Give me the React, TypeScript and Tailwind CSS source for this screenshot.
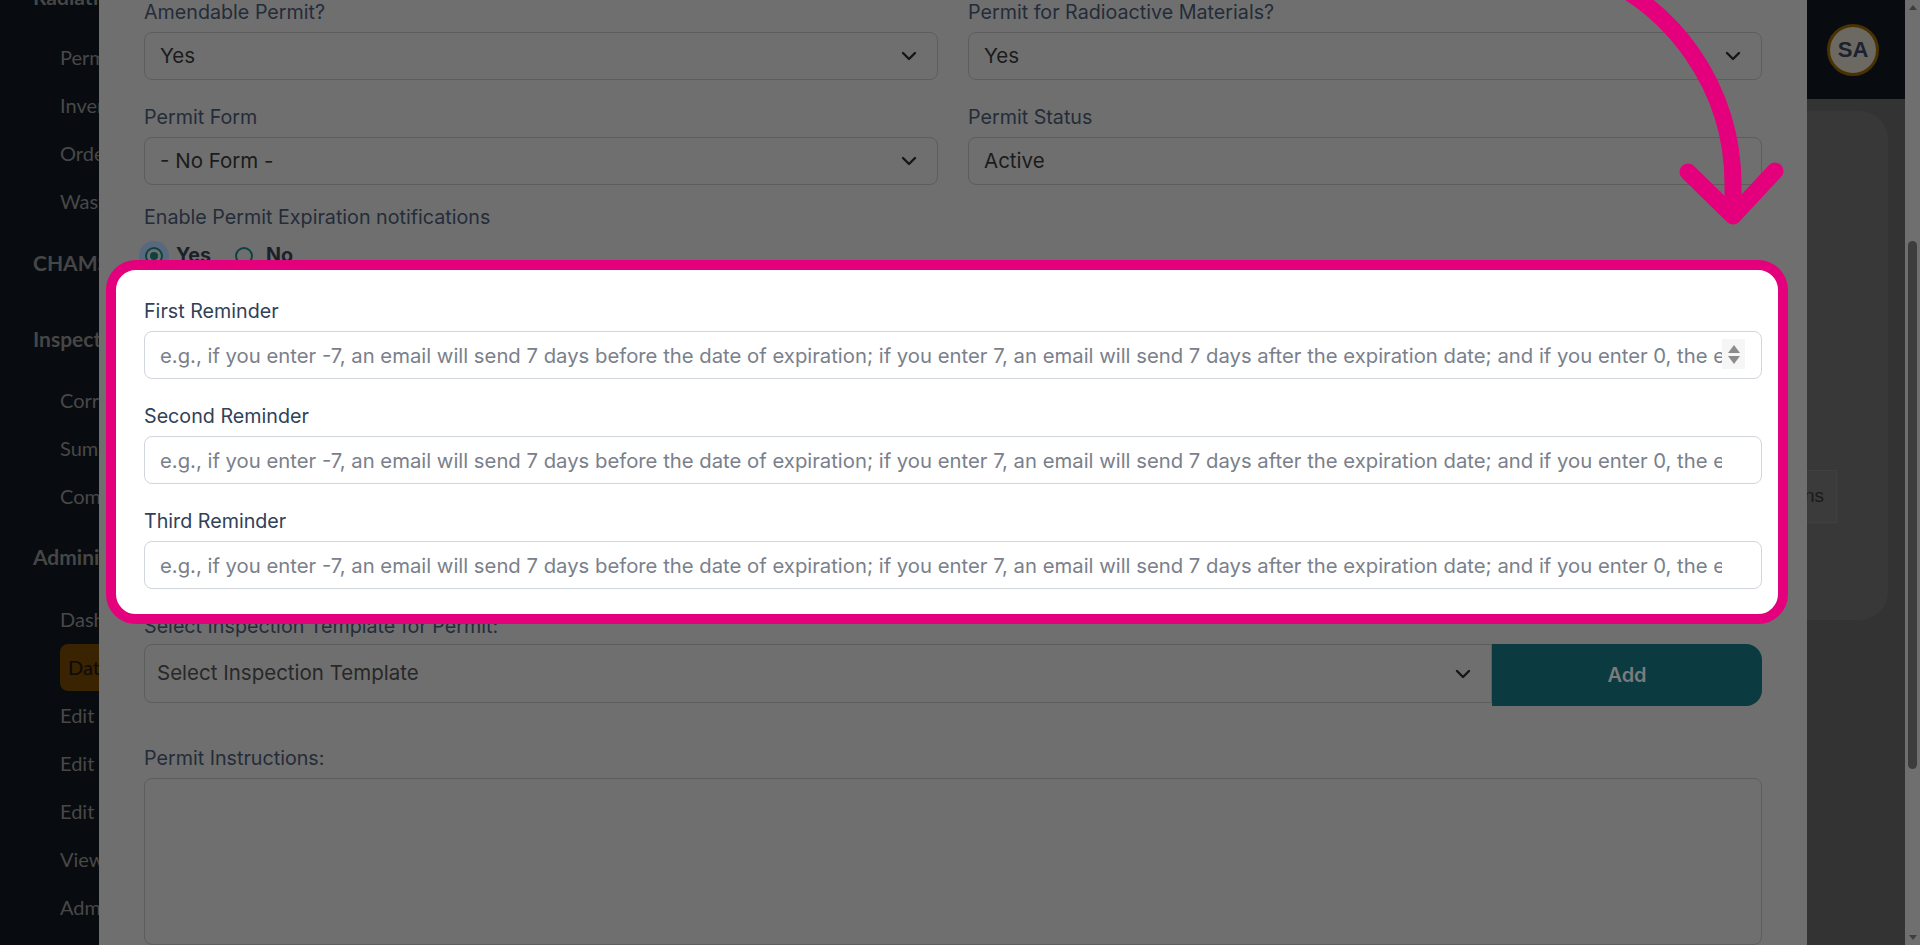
import React from "react";

const hint =
  "e.g., if you enter -7, an email will send 7 days before the date of expiration; if you enter 7, an email will send 7 days after the expiration date; and if you enter 0, the email will send on the date of expiration.";

const navItems = [
  { label: "Radiation Safety", head: true, gap: "mt-[-27px]" },
  { label: "Permits", gap: "mt-3" },
  { label: "Inventory", gap: "" },
  { label: "Orders", gap: "" },
  { label: "Waste", gap: "" },
  { label: "CHAMS", head: true, gap: "mt-[14px]" },
  { label: "Inspections", head: true, gap: "mt-[28px]" },
  { label: "Corrective Actions", gap: "mt-[13px]" },
  { label: "Summary", gap: "" },
  { label: "Completed", gap: "" },
  { label: "Administration", head: true, gap: "mt-[13px]" },
  { label: "Dashboard", gap: "mt-[14px]" },
  { label: "Data Management", gap: "", active: true },
  { label: "Edit Permits", gap: "" },
  { label: "Edit Forms", gap: "" },
  { label: "Edit Templates", gap: "" },
  { label: "View Logs", gap: "" },
  { label: "Admin Settings", gap: "" },
];

function Chevron({ className }: { className?: string }) {
  return (
    <svg viewBox="0 0 16 10" className={className} fill="none" stroke="currentColor" strokeWidth={2.4} strokeLinecap="round" strokeLinejoin="round">
      <path d="M2 2l6 6 6-6" />
    </svg>
  );
}

function Sidebar() {
  return (
    <aside className="w-[99px] shrink-0 overflow-hidden bg-[#080c10] font-[Lato,sans-serif] text-[20px]">
      <div className="flex w-[280px] flex-col">
        {navItems.map((item) => (
          <div
            key={item.label}
            className={`${item.gap} flex h-12 items-center whitespace-nowrap ${
              item.head ? "pl-[33px] text-[21px] font-bold text-[#464646]" : "pl-[60px] text-[#484848]"
            }`}
          >
            {item.active ? (
              <span className="flex h-[47px] w-full items-center rounded-lg bg-[#3a2300] pl-2 text-[#0b0b0b]">{item.label}</span>
            ) : (
              item.label
            )}
          </div>
        ))}
      </div>
    </aside>
  );
}

function DimField({ label, value, chevron = true }: { label: string; value: string; chevron?: boolean }) {
  return (
    <div className="flex flex-col gap-2">
      <label className="h-6 text-[19.7px] leading-6 text-[#242c39]">{label}</label>
      <div className="flex h-12 items-center justify-between rounded-lg border border-[#5d5d5d] pl-[15px] pr-5 text-[20.5px] text-[#1b1b1b]">
        <span>{value}</span>
        {chevron && <Chevron className="h-[10px] w-4 text-[#161616]" />}
      </div>
    </div>
  );
}

function Radio({ label, checked }: { label: string; checked?: boolean }) {
  return (
    <label className="flex items-center gap-[13px]">
      <span
        className={`flex h-[18px] w-[18px] items-center justify-center rounded-full border-2 border-[#0b4343] ${
          checked ? "ring-[6px] ring-[#58687f]" : ""
        }`}
      >
        {checked && <span className="h-2 w-2 rounded-full bg-[#0b4343]" />}
      </span>
      {label}
    </label>
  );
}

function Reminder({ label, spinner }: { label: string; spinner?: boolean }) {
  return (
    <div className="flex flex-col gap-2">
      <label className="h-6 text-[19.7px] leading-6 text-slate-700">{label}</label>
      <div className="relative">
        <input
          type="text"
          placeholder={hint}
          className="h-12 w-full rounded-lg border border-gray-300 bg-white pl-[15px] pr-[39px] text-[20.3px] text-gray-700 outline-none placeholder:text-[#7a808b]"
        />
        {spinner && (
          <span className="absolute right-[17px] top-2 flex h-[30px] w-[23px] flex-col items-center justify-center gap-[3px] bg-[#f6f6f6]">
            <span className="h-0 w-0 border-x-[6px] border-b-[8px] border-x-transparent border-b-[#8c8c8c]" />
            <span className="h-0 w-0 border-x-[6px] border-t-[8px] border-x-transparent border-t-[#8c8c8c]" />
          </span>
        )}
      </div>
    </div>
  );
}

function Modal() {
  return (
    <section className="flex w-[1708px] shrink-0 flex-col bg-[#6f6f6f] px-[45px] font-[Inter,sans-serif]">
      <div className="grid grid-cols-2 gap-x-[30px] gap-y-[25px]">
        <DimField label="Amendable Permit?" value="Yes" />
        <DimField label="Permit for Radioactive Materials?" value="Yes" />
        <DimField label="Permit Form" value="- No Form -" />
        <DimField label="Permit Status" value="Active" chevron={false} />
      </div>

      <p className="mt-5 h-6 text-[19.7px] leading-6 text-[#242c39]">Enable Permit Expiration notifications</p>
      <div className="mt-[15px] flex h-6 items-center gap-6 pl-px text-[19.7px] font-bold text-[#1b2129]">
        <Radio label="Yes" checked />
        <Radio label="No" />
      </div>

      {/* highlighted reminders */}
      <div className="relative z-10 mb-[-10px] ml-[-38px] mr-[-26px] mt-[-8px] flex flex-col gap-[25px] rounded-[30px] border-[10px] border-[#e4007c] bg-white pb-[25px] pl-[28px] pr-4 pt-[29px]">
        <Reminder label="First Reminder" spinner />
        <Reminder label="Second Reminder" />
        <Reminder label="Third Reminder" />
      </div>

      <p className="h-6 text-[19.7px] leading-6 text-[#242c39]">Select Inspection Template for Permit:</p>
      <div className="mt-[6px] flex items-start">
        <div className="flex h-[59px] flex-1 items-center justify-between rounded-l-lg border border-[#5d5d5d] pl-3 pr-5 text-[20.5px] text-[#282828]">
          <span>Select Inspection Template</span>
          <Chevron className="h-[10px] w-4 text-[#161616]" />
        </div>
        <button className="h-[62px] w-[270px] rounded-r-2xl bg-[#0b3a40] text-[20px] font-semibold text-[#7b7b7b]">Add</button>
      </div>

      <p className="mt-10 h-6 text-[19.7px] leading-6 text-[#242c39]">Permit Instructions:</p>
      <div className="mt-2 h-[300px] rounded-lg border border-[#5d5d5d]" />
    </section>
  );
}

function RightStrip() {
  return (
    <div className="flex w-[98px] shrink-0 flex-col">
      <header className="flex h-[99px] items-center bg-[#080c10] pl-5">
        <div className="flex h-[52px] w-[52px] items-center justify-center rounded-full border-[3px] border-[#4a3100] bg-[#6b6962] font-[Arial,sans-serif] text-[22px] font-bold text-[#1b2230]">
          SA
        </div>
      </header>
      <div className="flex-1 bg-[#333333] pt-3">
        <div className="flex h-[509px] w-[81px] flex-col rounded-r-[28px] bg-[#383838] pt-[359px]">
          <div className="flex h-[53px] w-[30px] items-center justify-end overflow-hidden border-y border-r border-[#404040] bg-[#3b3b3b] pr-3 font-[Arial,sans-serif] text-[19px] text-[#1a1a1a]">
            <span className="whitespace-nowrap">Permissions</span>
          </div>
        </div>
      </div>
    </div>
  );
}

function Scrollbar() {
  return (
    <div className="flex w-[15px] shrink-0 flex-col items-center bg-[#6f6f6f]">
      <span className="mt-[5px] h-0 w-0 border-x-[4px] border-b-[5px] border-x-transparent border-b-[#3e3e3e]" />
      <span className="mt-[231px] h-[528px] w-[9px] rounded-full bg-[#3d3d3d]" />
      <span className="mt-auto mb-[5px] h-0 w-0 border-x-[4px] border-t-[5px] border-x-transparent border-t-[#3e3e3e]" />
    </div>
  );
}

export default function App() {
  return (
    <div className="relative flex h-[945px] w-[1920px] overflow-hidden bg-[#333333]">
      <Sidebar />
      <Modal />
      <RightStrip />
      <Scrollbar />

      {/* annotation arrow */}
      <svg className="pointer-events-none absolute inset-0 z-20" width="1920" height="945" viewBox="0 0 1920 945" fill="none">
        <path
          d="M1584 -30 A228 228 0 0 1 1733 184 L1733 212"
          stroke="#e4007c"
          strokeWidth={17}
          strokeLinecap="round"
        />
        <path d="M1688 172 L1733 216 L1775 171" stroke="#e4007c" strokeWidth={17} strokeLinecap="round" strokeLinejoin="round" />
      </svg>
    </div>
  );
}
